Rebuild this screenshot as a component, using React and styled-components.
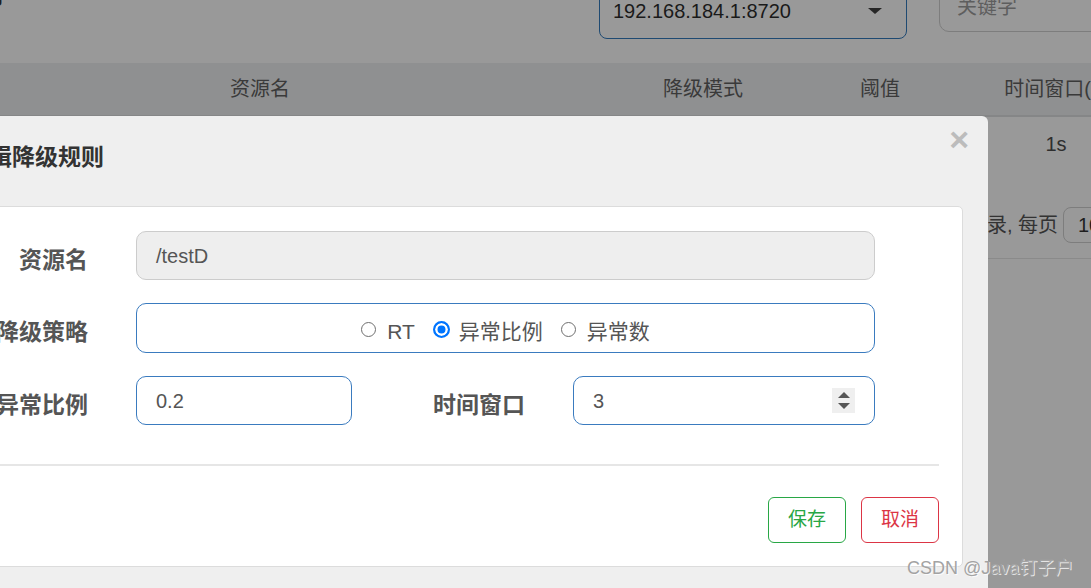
import React from 'react';
import styled, { createGlobalStyle } from 'styled-components';

const GlobalStyle = createGlobalStyle`
  html, body {
    margin: 0;
    padding: 0;
  }
  body {
    font-family: "Liberation Sans", "Noto Sans CJK SC", sans-serif;
    background: #999999;
  }
  * {
    box-sizing: border-box;
  }
`;

const columns = [
  { key: 'resource', title: '资源名', value: '/testD' },
  { key: 'grade', title: '降级模式', value: '异常比例' },
  { key: 'count', title: '阈值', value: '0.2' },
  { key: 'window', title: '时间窗口(s)', value: '1s' },
];

const options = [
  { label: 'RT', checked: false },
  { label: '异常比例', checked: true },
  { label: '异常数', checked: false },
];

function Spinner() {
  return (
    <SpinBox>
      <Arrow $up />
      <Arrow />
    </SpinBox>
  );
}

function App() {
  return (
    <>
      <GlobalStyle />
      <Page>
        <TopBar>
          <PageTitle>
            <span>降级规则</span>
          </PageTitle>
          <MachineSelect>
            <span>192.168.184.1:8720</span>
            <Caret />
          </MachineSelect>
          <SearchBox>关键字</SearchBox>
        </TopBar>

        <HeadRow>
          {columns.map((c) => (
            <Cell key={c.key}>{c.title}</Cell>
          ))}
        </HeadRow>

        <BodyRow>
          {columns.map((c) => (
            <Cell key={c.key}>{c.value}</Cell>
          ))}
        </BodyRow>

        <Pager>
          <PagerText>共 1 条记录, 每页</PagerText>
          <PageSize>10</PageSize>
        </Pager>

        <Modal>
          <ModalHeader>
            <ModalTitle>编辑降级规则</ModalTitle>
            <Close>×</Close>
          </ModalHeader>

          <Panel>
            <FormRow>
              <Label>资源名</Label>
              <Field $width={739} $disabled>/testD</Field>
            </FormRow>

            <FormRow>
              <Label>降级策略</Label>
              <RadioBox>
                {options.map((o) => (
                  <RadioOption key={o.label}>
                    <RadioDot $checked={o.checked} />
                    <span>{o.label}</span>
                  </RadioOption>
                ))}
              </RadioBox>
            </FormRow>

            <FormRow>
              <Label>异常比例</Label>
              <Field $width={216}>0.2</Field>
              <Label $width={173}>时间窗口</Label>
              <Field $width={302}>
                <span>3</span>
                <Spinner />
              </Field>
            </FormRow>

            <Divider />

            <Footer>
              <Button $color="#28a745">保存</Button>
              <Button $color="#dc3545">取消</Button>
            </Footer>
          </Panel>
        </Modal>

        <Watermark>CSDN @Java钉子户</Watermark>
      </Page>
    </>
  );
}

export default App;

const Page = styled.div`
  position: relative;
  width: 1091px;
  height: 588px;
  overflow: hidden;
  background: #999999;
  color: #333;
`;

const TopBar = styled.div`
  display: flex;
  align-items: flex-start;
  height: 63px;

  & > * {
    flex-shrink: 0;
  }
`;

const PageTitle = styled.div`
  width: 3px;
  display: flex;
  justify-content: flex-end;
  margin-top: -17px;
  font-size: 22px;
  line-height: 26px;
  font-weight: bold;
  color: #1e1e1e;
  white-space: nowrap;
`;

const MachineSelect = styled.div`
  display: flex;
  align-items: center;
  justify-content: space-between;
  margin-left: 596px;
  margin-top: -12px;
  width: 308px;
  height: 51px;
  padding: 0 24px 5px 13px;
  border: 1px solid #1f4a72;
  border-radius: 8px;
  font-size: 20px;
  line-height: 24px;
  color: #1a1a1a;
`;

const Caret = styled.span`
  width: 0;
  height: 0;
  border-left: 7px solid transparent;
  border-right: 7px solid transparent;
  border-top: 6px solid #262626;
`;

const SearchBox = styled.div`
  margin-left: 32px;
  margin-top: -18px;
  width: 200px;
  height: 50px;
  padding: 12px 0 0 17px;
  border: 1px solid #7d7d7d;
  border-radius: 10px;
  font-size: 20px;
  line-height: 24px;
  color: #5e5e5e;
`;

const HeadRow = styled.div`
  display: grid;
  grid-template-columns: 632px 254px 100px 252px;
  align-items: center;
  margin-left: -56px;
  height: 54px;
  background: #8f9091;
  border-bottom: 2px solid #858687;
  font-size: 20px;
  line-height: 24px;
  color: #3a3a3a;
`;

const BodyRow = styled.div`
  display: grid;
  grid-template-columns: 632px 254px 100px 252px;
  align-items: center;
  margin-left: -56px;
  height: 54px;
  font-size: 20px;
  line-height: 24px;
  color: #2e2e2e;
`;

const Cell = styled.div`
  text-align: center;
  white-space: nowrap;
  overflow: hidden;
`;

const Pager = styled.div`
  display: flex;
  align-items: flex-start;
  height: 88px;
  padding-top: 36px;
  border-bottom: 1px solid #8a8a8a;
  font-size: 20px;
  line-height: 36px;
  color: #333;
`;

const PagerText = styled.div`
  flex: 0 0 1058px;
  text-align: right;
  white-space: nowrap;
`;

const PageSize = styled.div`
  flex: 0 0 70px;
  height: 36px;
  margin-left: 5px;
  padding-left: 14px;
  border: 1px solid #7d7d7d;
  border-radius: 8px;
  line-height: 34px;
  color: #1e1e1e;
`;

const Modal = styled.div`
  position: absolute;
  top: 116px;
  left: -60px;
  width: 1048px;
  height: 520px;
  background: #efefef;
  border-radius: 6px;
`;

const ModalHeader = styled.div`
  display: flex;
  justify-content: space-between;
  align-items: flex-start;
  height: 90px;
  padding: 0 19px 0 26px;
`;

const ModalTitle = styled.h4`
  margin: 26px 0 0;
  font-size: 23px;
  line-height: 30px;
  font-weight: bold;
  color: #333;
  white-space: nowrap;
`;

const Close = styled.span`
  margin-top: 11px;
  font-size: 34px;
  line-height: 24px;
  font-weight: bold;
  color: #bcbcbc;
`;

const Panel = styled.div`
  margin: 0 25px;
  padding-top: 24px;
  background: #fff;
  border: 1px solid #dcdcdc;
  border-radius: 5px;
`;

const FormRow = styled.div`
  display: flex;
  align-items: center;
  margin-bottom: 23px;
`;

const Label = styled.label`
  flex: 0 0 ${(p) => p.$width || 122}px;
  margin-right: 48px;
  padding-top: 8px;
  text-align: right;
  font-size: 23px;
  line-height: 30px;
  font-weight: bold;
  color: #555;
  white-space: nowrap;
`;

const Field = styled.div`
  display: flex;
  align-items: center;
  justify-content: space-between;
  flex: 0 0 ${(p) => p.$width}px;
  height: 49px;
  padding: 0 19px 0 19px;
  border: 1px solid ${(p) => (p.$disabled ? '#cccccc' : '#3a7bbf')};
  border-radius: 10px;
  background: ${(p) => (p.$disabled ? '#eeeeee' : '#ffffff')};
  font-size: 20px;
  line-height: 24px;
  color: #555;
`;

const RadioBox = styled.div`
  display: flex;
  justify-content: center;
  align-items: center;
  gap: 18px;
  flex: 0 0 739px;
  height: 50px;
  padding-top: 8px;
  border: 1px solid #3a7bbf;
  border-radius: 10px;
  font-size: 21px;
  line-height: 26px;
  color: #555;
`;

const RadioOption = styled.span`
  display: inline-flex;
  align-items: center;
  white-space: nowrap;
`;

const RadioDot = styled.span`
  display: inline-block;
  width: ${(p) => (p.$checked ? 17 : 15)}px;
  height: ${(p) => (p.$checked ? 17 : 15)}px;
  margin-right: ${(p) => (p.$checked ? 9 : 11)}px;
  margin-top: -5px;
  border-radius: 50%;
  border: ${(p) => (p.$checked ? '2px solid #0075ff' : '1.5px solid #6f6f6f')};
  background: ${(p) => (p.$checked ? '#0075ff' : '#fff')};
  box-shadow: ${(p) => (p.$checked ? 'inset 0 0 0 2.5px #fff' : 'none')};
`;

const SpinBox = styled.span`
  display: flex;
  flex-direction: column;
  align-items: center;
  justify-content: center;
  gap: 5px;
  width: 23px;
  height: 25px;
  background: #efefef;
`;

const Arrow = styled.span`
  width: 0;
  height: 0;
  border-left: 6px solid transparent;
  border-right: 6px solid transparent;
  ${(p) =>
    p.$up ? 'border-bottom: 6px solid #555;' : 'border-top: 6px solid #555;'}
`;

const Divider = styled.div`
  height: 2px;
  margin: 39px 23px 0 0;
  background: #e6e6e6;
`;

const Footer = styled.div`
  display: flex;
  justify-content: flex-end;
  gap: 15px;
  padding: 31px 23px 23px 0;
`;

const Button = styled.button`
  height: 46px;
  padding: 0 19px;
  border: 1px solid ${(p) => p.$color};
  border-radius: 6px;
  background: #fff;
  color: ${(p) => p.$color};
  font-family: inherit;
  font-size: 19px;
  line-height: 24px;
`;

const Watermark = styled.div`
  position: absolute;
  left: 907px;
  top: 557px;
  font-size: 18px;
  line-height: 22px;
  color: #a3a3a3;
  text-shadow: 1px 1px 0 rgba(255, 255, 255, 0.75);
  white-space: nowrap;
`;
